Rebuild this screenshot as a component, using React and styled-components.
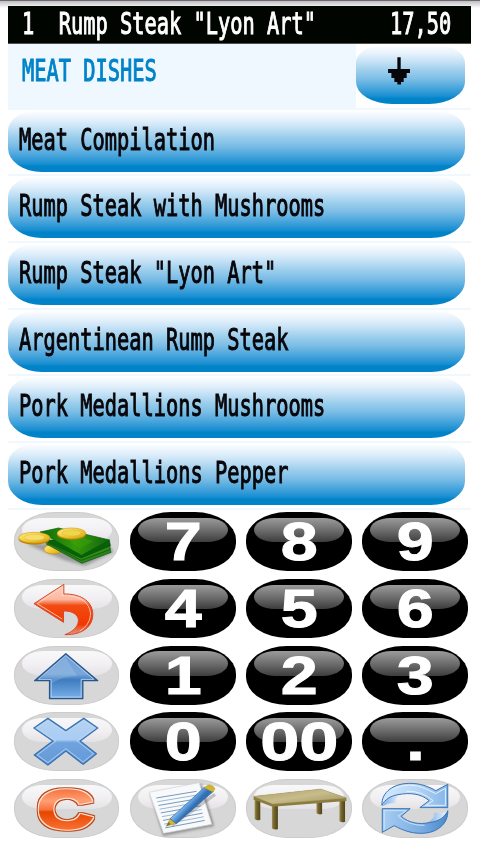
import React from 'react';
import styled, { createGlobalStyle } from 'styled-components';

const GlobalStyle = createGlobalStyle`
  * { box-sizing: border-box; }
  body { margin: 0; background: #fff; overflow: hidden; }
`;

const Screen = styled.main`
  width: 480px;
  height: 854px;
  padding: 5.5px 8px 0;
  background: linear-gradient(#5f5d60 0, #77757a 1px, #c4c2c5 1.5px, #fff 8px);
`;

const Mono = styled.span`
  font-family: "DejaVu Sans Mono", monospace;
  font-size: 30.5px;
  line-height: 36px;
  white-space: pre;
  display: block;
  width: max-content;
  color: ${(p) => p.$color || '#08060a'};
  -webkit-text-stroke: 1.05px ${(p) => p.$color || '#08060a'};
  transform: scaleX(0.667);
  transform-origin: left center;
`;

const OrderBar = styled.header`
  display: flex;
  width: 463px;
  height: 38px;
  padding: 0.5px 0 0 14px;
  background: #000500;
  border-bottom: 1px solid #55504f;
`;

const OrderLine = styled.div`
  flex: 0 0 367.5px;
  width: 367.5px;
`;

const Price = styled.div`
  flex: 0 0 62px;
  width: 62px;
`;

const CategoryRow = styled.div`
  display: flex;
  width: 463px;
  height: 66px;
  border-bottom: 2px solid #eff7ff;
`;

const CategoryName = styled.div`
  width: 348px;
  height: 66px;
  padding: 9.5px 0 0 13.5px;
  background: #eff7ff;
`;

const Glossy = styled.button`
  display: block;
  border: 0;
  padding: 0;
  text-align: left;
  background: linear-gradient(
    #fdfeff 0%, #e2f0fb 15%, #c6e2f6 27%, #9dcfec 42%, #7bbde6 57%,
    #4aa6dc 72%, #1b8fd2 86%, #0083c8 91%, #0083c8 100%
  );
`;

const ScrollButton = styled(Glossy)`
  width: 109px;
  height: 58.5px;
  margin-top: 2px;
  border-radius: 24px 24px 36px 36px / 17px 17px 22px 22px;
  svg { display: block; }
`;

const ItemRow = styled.div`
  width: 463px;
  height: 66.7px;
  padding-top: 1px;
  border-bottom: 2px solid #f0f8ff;
`;

const ItemButton = styled(Glossy)`
  width: 457px;
  height: 61px;
  padding: 0 0 3px 10.5px;
  border-radius: 28px 28px 34px 34px / 20px 20px 24px 24px;
`;

const Keypad = styled.section`
  display: grid;
  grid-template-columns: repeat(4, 105.7px);
  grid-auto-rows: 59px;
  gap: 7.7px 10.5px;
  padding: 2.7px 0 0 5.7px;
`;

const Key = styled.button`
  display: grid;
  grid-template-rows: 100%;
  grid-template-columns: 100%;
  border: ${(p) => (p.$dark ? '0' : '1px solid #ccc')};
  padding: 0;
  border-radius: 41px / 28px;
  background: ${(p) => (p.$dark ? '#000' : '#d7d7d7')};
  & > * { grid-area: 1 / 1; }
`;

const Shine = styled.span`
  width: 90px;
  height: 24.5px;
  margin: ${(p) => (p.$dark ? '5.5px' : '4.5px')} 0 0 ${(p) => (p.$dark ? '8px' : '7px')};
  border-radius: 22px / 13px;
  background: ${(p) => (p.$dark
    ? 'linear-gradient(#9b9b9b, #6e6e6e 50%, #3d3d3d)'
    : 'linear-gradient(#f8f8f9, #f1eff2 55%, #e4e2e5)')};
`;

const Digit = styled.span`
  place-self: center;
  font: bold 54.5px/59px "Liberation Sans", Arial, sans-serif;
  color: #fff;
  -webkit-text-stroke: 1px #fff;
  transform: scaleX(${(p) => (p.$pair ? 1.29 : 1.22)});
`;

const Drawing = styled.svg`
  width: 105.7px;
  height: 59px;
  margin: -1px 0 0 -1px;
`;

const Money = () => (
  <Drawing viewBox="42 22 318 177" preserveAspectRatio="none">
    <defs>
      <linearGradient id="coin" x1="0" y1="0" x2="1" y2="1">
        <stop offset="0" stopColor="#fff08a" /><stop offset=".5" stopColor="#f2cb3a" /><stop offset="1" stopColor="#d8a00c" />
      </linearGradient>
      <linearGradient id="bill" x1="0" y1="0" x2="1" y2="0">
        <stop offset="0" stopColor="#0c6a0b" /><stop offset=".5" stopColor="#349a08" /><stop offset="1" stopColor="#116510" />
      </linearGradient>
      <filter id="soft"><feGaussianBlur stdDeviation="5" /></filter>
    </defs>
    <path d="M80 118L190 165L255 184L342 142L320 112Z" fill="#555" opacity=".45" filter="url(#soft)" />
    <ellipse cx="160" cy="134" rx="28" ry="14" fill="url(#coin)" stroke="#b88a10" strokeWidth="2" />
    <path d="M138 117L246 176L334 143L326 124Z" fill="#2b8417" stroke="#064f08" strokeWidth="2" />
    <path d="M134 110L244 167L332 134L328 115Z" fill="#2f8d18" stroke="#064f08" strokeWidth="2" />
    <path d="M130 106L244 160L332 123L329 107Z" fill="#086009" stroke="#064f08" strokeWidth="2" />
    <path d="M120 82L176 70L330 106L245 152Z" fill="url(#bill)" stroke="#075b0a" strokeWidth="2" />
    <path d="M205 105L251 99L282 109L239 132Z" fill="#49a90c" opacity=".35" />
    <ellipse cx="103" cy="104" rx="47" ry="16" fill="#b98208" />
    <ellipse cx="103" cy="99" rx="47" ry="16" fill="url(#coin)" stroke="#d29b13" strokeWidth="2" />
    <ellipse cx="103" cy="98" rx="31" ry="9" fill="#f6dc69" stroke="#e2ba35" strokeWidth="1.5" />
    <ellipse cx="215" cy="90" rx="43" ry="15" fill="#b98208" />
    <ellipse cx="215" cy="86" rx="43" ry="16" fill="url(#coin)" stroke="#d29b13" strokeWidth="2" />
    <ellipse cx="215" cy="85" rx="28" ry="9" fill="#eed74f" stroke="#e2ba35" strokeWidth="1.5" />
  </Drawing>
);

const Undo = () => (
  <Drawing viewBox="42 222 318 177" preserveAspectRatio="none">
    <defs>
      <linearGradient id="undo" x1="0" y1="0" x2="0" y2="1">
        <stop offset="0" stopColor="#ffd1bd" /><stop offset=".3" stopColor="#fbb7a0" />
        <stop offset=".42" stopColor="#f24b12" /><stop offset=".8" stopColor="#f13800" /><stop offset="1" stopColor="#ee6a45" stopOpacity=".6" />
      </linearGradient>
    </defs>
    <path d="M192 238L102 296L191 352L191 318C220 316 243 334 234 356C228 372 214 382 195 389C250 390 280 363 279 326C277 285 238 266 192 267Z"
      fill="url(#undo)" stroke="#d74a2c" strokeWidth="3" strokeLinejoin="round" />
    <path d="M187 342L112 296L187 248V272C230 270 268 286 272 324C273 345 262 365 240 378"
      fill="none" stroke="#ffd8ca" strokeWidth="2.5" />
  </Drawing>
);

const Up = () => (
  <Drawing viewBox="42 18 318 177" preserveAspectRatio="none">
    <defs>
      <linearGradient id="up" x1="0" y1="0" x2="0" y2="1">
        <stop offset="0" stopColor="#6e9fd6" /><stop offset=".45" stopColor="#79a7d9" /><stop offset=".58" stopColor="#3f7cbe" /><stop offset="1" stopColor="#79b0ea" />
      </linearGradient>
    </defs>
    <path d="M198 41L294 122H249V176H149V122H104Z" fill="url(#up)" stroke="#2c5587" strokeWidth="4" strokeLinejoin="round" />
    <path d="M198 47L282 118H244V171H154V118H116Z" fill="none" stroke="#a9cbef" strokeWidth="3" />
    <path d="M156 130Q190 108 232 108L197 52L124 115H156Z" fill="#b7d3f1" opacity=".25" />
  </Drawing>
);

const Cross = () => (
  <Drawing viewBox="42 218 318 177" preserveAspectRatio="none">
    <defs>
      <linearGradient id="cross" x1="0" y1="0" x2="0" y2="1">
        <stop offset="0" stopColor="#b7d3f2" /><stop offset=".46" stopColor="#a8ccf3" /><stop offset=".52" stopColor="#70a3de" /><stop offset="1" stopColor="#6499d8" />
      </linearGradient>
    </defs>
    <path d="M144 237L198 274L252 237L294 266L241 305L290 343L250 375L198 335L144 377L103 347L159 305L102 266Z"
      fill="url(#cross)" stroke="#3b72b0" strokeWidth="4" strokeLinejoin="round" />
    <path d="M144 243L198 280L252 243L285 266L232 305L281 343L250 368L198 328L144 370L112 347L168 305L111 266Z"
      fill="none" stroke="#b9d7f7" strokeWidth="2.5" />
  </Drawing>
);

const ClearGlyph = styled.text`
  font: bold 163px "Liberation Sans", Arial, sans-serif;
`;

const Clear = () => (
  <Drawing viewBox="42 29 318 177" preserveAspectRatio="none">
    <defs>
      <linearGradient id="clear" gradientUnits="userSpaceOnUse" x1="0" y1="-120" x2="0" y2="10">
        <stop offset="0" stopColor="#f4703c" /><stop offset=".3" stopColor="#ff9e73" /><stop offset=".5" stopColor="#f8733d" />
        <stop offset=".55" stopColor="#e54600" /><stop offset="1" stopColor="#fb7437" />
      </linearGradient>
      <filter id="rims" x="-20%" y="-20%" width="140%" height="140%" colorInterpolationFilters="sRGB">
        <feMorphology in="SourceAlpha" operator="dilate" radius="3.2" result="rim" />
        <feFlood floodColor="#ffe3d4" />
        <feComposite in2="rim" operator="in" result="lightRim" />
        <feMorphology in="SourceAlpha" operator="dilate" radius="6.2" result="edge" />
        <feFlood floodColor="#b94a1c" />
        <feComposite in2="edge" operator="in" result="darkEdge" />
        <feMerge>
          <feMergeNode in="darkEdge" /><feMergeNode in="lightRim" /><feMergeNode in="SourceGraphic" />
        </feMerge>
      </filter>
    </defs>
    <g filter="url(#rims)">
      <ClearGlyph transform="translate(112 176) scale(1.43 1)" fill="url(#clear)" stroke="url(#clear)" strokeWidth="7">C</ClearGlyph>
    </g>
  </Drawing>
);

const Note = () => (
  <Drawing viewBox="390 29 318 177" preserveAspectRatio="none">
    <defs>
      <linearGradient id="pencil" gradientUnits="userSpaceOnUse" x1="553" y1="88" x2="578" y2="112">
        <stop offset="0" stopColor="#3e75b1" /><stop offset=".35" stopColor="#8fc1ef" /><stop offset=".65" stopColor="#5a9bdc" /><stop offset="1" stopColor="#336fb2" />
      </linearGradient>
      <filter id="paperShade"><feGaussianBlur stdDeviation="4" /></filter>
    </defs>
    <path d="M450 73L607 45L643 170L490 199Z" fill="#444" opacity=".5" filter="url(#paperShade)" />
    <path d="M448 69L598 40L636 165L491 192Z" fill="#f8f9fb" stroke="#d5d7da" strokeWidth="2" />
    {[0, 1, 2, 3, 4, 5, 6, 7, 8].map((n) => (
      <path key={n} d={`M${469 + n * 3.4} ${86 + n * 11.2}L${590 + n * 3.1} ${66 + n * 10.9}`} stroke={n % 2 ? '#9bb9d4' : '#7799bb'} strokeWidth="3" />
    ))}
    <path d="M516 168L646 75" stroke="#555" strokeWidth="10" opacity=".3" />
    <path d="M499 171L512 146L530 162Z" fill="#d4b52c" stroke="#98801c" />
    <path d="M511 148L614 54L641 66L529 163Z" fill="url(#pencil)" stroke="#2c609c" strokeWidth="2" />
    <path d="M613 55L624 47Q640 45 646 59L638 68Z" fill="#d2b52d" stroke="#97831e" />
    <path d="M499 171L506 158L513 165Z" fill="#74723b" />
  </Drawing>
);

const Table = () => (
  <Drawing viewBox="18 29 318 177" preserveAspectRatio="none">
    <defs>
      <linearGradient id="leg"><stop offset="0" stopColor="#a19254" /><stop offset=".35" stopColor="#75652e" /><stop offset="1" stopColor="#504316" /></linearGradient>
      <linearGradient id="wood" x1="0" y1="0" x2="1" y2="1"><stop offset="0" stopColor="#aa9d64" /><stop offset=".5" stopColor="#c7bc8b" /><stop offset="1" stopColor="#a19358" /></linearGradient>
    </defs>
    <path d="M230 95H247V134Q238 137 230 132Z" fill="url(#leg)" />
    <path d="M44 91H61V151Q52 155 44 149Z" fill="url(#leg)" />
    <path d="M299 90H316V157Q307 161 299 155Z" fill="url(#leg)" />
    <path d="M96 106H114V179Q105 183 96 177Z" fill="url(#leg)" />
    <path d="M41 81L243 59L320 85V95L98 112L41 91Z" fill="#8b7c40" />
    <path d="M41 81L243 59L320 86L98 104Z" fill="url(#wood)" stroke="#aea26c" />
  </Drawing>
);

const Refresh = () => (
  <Drawing viewBox="366 29 318 177" preserveAspectRatio="none">
    <defs>
      <linearGradient id="flowTop"><stop offset="0" stopColor="#d4e8fc" /><stop offset=".5" stopColor="#b8d7f5" /><stop offset="1" stopColor="#84b5e8" /></linearGradient>
      <linearGradient id="flowBottom"><stop offset="0" stopColor="#a8cdf2" /><stop offset=".6" stopColor="#79ace2" /><stop offset="1" stopColor="#4b88cb" /></linearGradient>
      <linearGradient id="tail"><stop offset="0" stopColor="#79afe7" /><stop offset="1" stopColor="#edf5fd" /></linearGradient>
    </defs>
    <path d="M427 111Q440 78 483 75Q463 85 467 101Q447 100 427 111Z" fill="url(#tail)" />
    <path d="M426 108C424 67 463 42 510 42C541 42 566 51 588 64L624 45V115H540L568 94C544 73 510 69 474 76C449 81 435 91 426 108Z"
      fill="url(#flowTop)" stroke="#3973b2" strokeWidth="3" strokeLinejoin="round" />
    <path d="M456 60Q508 36 557 58L588 73L617 57V108H558L580 94Q546 64 500 66" fill="none" stroke="#e2f0fd" strokeWidth="3" />
    <path d="M624 124Q605 159 562 160Q587 147 583 130Q606 134 624 124Z" fill="url(#tail)" />
    <path d="M624 124C626 164 591 192 544 192C512 192 487 182 463 169L427 189V118H511L484 141C507 161 536 166 568 160C599 156 616 143 624 124Z"
      fill="url(#flowBottom)" stroke="#3973b2" strokeWidth="3" strokeLinejoin="round" />
    <path d="M433 181V124H499L474 140Q507 169 554 168" fill="none" stroke="#c9e1f9" strokeWidth="3" />
  </Drawing>
);

const items = [
  'Meat Compilation',
  'Rump Steak with Mushrooms',
  'Rump Steak "Lyon Art"',
  'Argentinean Rump Steak',
  'Pork Medallions Mushrooms',
  'Pork Medallions Pepper',
];

const keys = [
  Money, '7', '8', '9',
  Undo, '4', '5', '6',
  Up, '1', '2', '3',
  Cross, '0', '00', '.',
  Clear, Note, Table, Refresh,
];

export default function App() {
  return (
    <>
      <GlobalStyle />
      <Screen>
        <OrderBar>
          <OrderLine><Mono $color="#fff">{'1  Rump Steak "Lyon Art"'}</Mono></OrderLine>
          <Price><Mono $color="#fff">17,50</Mono></Price>
        </OrderBar>
        <CategoryRow>
          <CategoryName><Mono $color="#0083c8">MEAT DISHES</Mono></CategoryName>
          <ScrollButton>
            <svg width="109" height="58.5" viewBox="348 138 327 176">
              <path d="M472 172H482V207H510V219H500V234H491V246H483V254H472V246H463V234H454V219H444V207H472Z" fill="#08060a" />
            </svg>
          </ScrollButton>
        </CategoryRow>
        {items.map((name) => (
          <ItemRow key={name}>
            <ItemButton><Mono>{name}</Mono></ItemButton>
          </ItemRow>
        ))}
        <Keypad>
          {keys.map((K, index) => {
            const dark = typeof K === 'string';
            return (
              <Key key={index} $dark={dark}>
                <Shine $dark={dark} />
                {dark ? <Digit $pair={K.length > 1}>{K}</Digit> : <K />}
              </Key>
            );
          })}
        </Keypad>
      </Screen>
    </>
  );
}
